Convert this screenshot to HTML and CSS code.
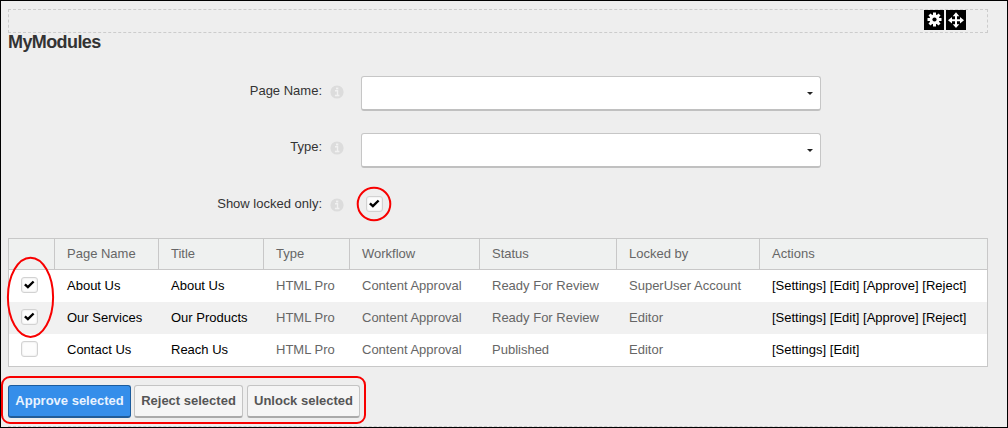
FILE: index.html
```html
<!DOCTYPE html>
<html lang="en">
<head>
<meta charset="utf-8">
<title>MyModules</title>
<link rel="stylesheet" href="styles.css">
</head>
<body>
<svg class="defs" width="0" height="0" aria-hidden="true">
  <symbol id="info" viewBox="0 0 14 14"><circle cx="7" cy="7" r="6.6" fill="#dcdcdc"/><path d="M5 5.8H7.5V10.3M4.9 10.5H9.4" fill="none" stroke="#f1f1f1" stroke-width="1.4"/><path d="M6 2.6H8.3V4.4H6Z" fill="#f1f1f1"/></symbol>
  <symbol id="tick" viewBox="0 0 16 16"><path d="M3.9 7.4L6.9 10.2L12.6 4.5" fill="none" stroke="#000" stroke-width="2.4"/></symbol>
</svg>
<main class="page">
  <div class="toolbar">
    <span class="tool"><svg width="20" height="20" viewBox="0 0 20 20"><g stroke="#fff" stroke-width="3"><path d="M10.5 2.5V16.5M3.5 9.5H17.5M5.5 4.5L15.5 14.5M15.5 4.5L5.5 14.5"/></g><circle cx="10.5" cy="9.5" r="5" fill="#fff"/><circle cx="10.5" cy="9.5" r="2.1" fill="#000"/></svg></span>
    <span class="tool"><svg width="20" height="20" viewBox="0 0 20 20"><path d="M10 4V17M4 10.2H16" stroke="#fff" stroke-width="2"/><path d="M10 2.3L13.3 6.2H6.7ZM10 18L13.3 14.2H6.7ZM2 10.2L6 6.9V13.5ZM18 10.2L14 6.9V13.5Z" fill="#fff"/></svg></span>
  </div>
  <h1 class="title">MyModules</h1>
  <section class="filters">
    <div class="field"><span class="label">Page Name:</span><svg class="info"><use href="#info"/></svg><div class="select"><i class="caret"></i></div></div>
    <div class="field type"><span class="label">Type:</span><svg class="info"><use href="#info"/></svg><div class="select"><i class="caret"></i></div></div>
    <div class="field locked"><span class="label">Show locked only:</span><svg class="info"><use href="#info"/></svg><span class="check"><svg><use href="#tick"/></svg></span></div>
  </section>
  <table class="grid">
    <colgroup><col class="c-check"><col class="c-page"><col class="c-title"><col class="c-type"><col class="c-flow"><col class="c-status"><col class="c-lock"><col class="c-act"></colgroup>
    <thead><tr><th></th><th>Page Name</th><th>Title</th><th>Type</th><th>Workflow</th><th>Status</th><th>Locked by</th><th>Actions</th></tr></thead>
    <tbody>
      <tr><td class="pick"><span class="check"><svg><use href="#tick"/></svg></span></td><td class="dark">About Us</td><td class="dark">About Us</td><td>HTML Pro</td><td>Content Approval</td><td>Ready For Review</td><td>SuperUser Account</td><td class="dark">[Settings] [Edit] [Approve] [Reject]</td></tr>
      <tr class="alt"><td class="pick"><span class="check"><svg><use href="#tick"/></svg></span></td><td class="dark">Our Services</td><td class="dark">Our Products</td><td>HTML Pro</td><td>Content Approval</td><td>Ready For Review</td><td>Editor</td><td class="dark">[Settings] [Edit] [Approve] [Reject]</td></tr>
      <tr><td class="pick"><span class="check"></span></td><td class="dark">Contact Us</td><td class="dark">Reach Us</td><td>HTML Pro</td><td>Content Approval</td><td>Published</td><td>Editor</td><td class="dark">[Settings] [Edit]</td></tr>
    </tbody>
  </table>
  <div class="actions">
    <button class="btn primary">Approve selected</button>
    <button class="btn reject">Reject selected</button>
    <button class="btn unlock">Unlock selected</button>
  </div>
  <div class="footline"></div>
</main>
<svg class="marks" width="1008" height="428" viewBox="0 0 1008 428" fill="none" stroke="#f80000" stroke-width="2">
  <circle cx="374" cy="204" r="16.3"/>
  <ellipse cx="30.5" cy="297.3" rx="22.6" ry="39.6"/>
  <rect x="2" y="377" width="363" height="46" rx="8"/>
</svg>
</body>
</html>
```
FILE: styles.css
```css
* { box-sizing: border-box; }
body {
  margin: 0;
  background: #eee;
  font: 13px/16px "Liberation Sans", Arial, sans-serif;
  color: #333;
}
.defs { position: absolute; }
.page {
  width: 1008px;
  height: 428px;
  border: 1px solid #000;
  padding: 8px 19px 0 7px;
  background: #eee;
  overflow: hidden;
}
.toolbar {
  display: flex;
  justify-content: flex-end;
  gap: 2px;
  height: 24px;
  padding-right: 21px;
  border: 1px dashed #ccc;
}
.tool { width: 20px; height: 20px; background: #000; }
.tool svg { display: block; }
.title {
  margin: 0;
  height: 43px;
  font-size: 18px;
  line-height: 18px;
  letter-spacing: -0.6px;
  color: #333;
}
.field { display: flex; height: 57px; }
.label { width: 314px; padding-top: 7px; text-align: right; }
.type .label { padding-top: 6px; }
.info { width: 14px; height: 14px; margin: 9px 17px 0 8px; }
.type .info { margin-top: 8px; }
.select {
  width: 460px;
  height: 35px;
  padding: 15px 7px 0 0;
  display: flex;
  justify-content: flex-end;
  background: #fff;
  border: 1px solid #c6c6c6;
  border-bottom: 2px solid #c0c0c0;
  border-radius: 3px;
}
.caret {
  width: 0;
  height: 0;
  border: 3px solid transparent;
  border-top-color: #222;
  border-bottom: 0;
}
.locked { height: 48px; }
.locked .label { padding-top: 6px; }
.locked .info { margin-top: 8px; }
.locked .check { margin: 6px 0 0 5px; }
.check {
  display: block;
  width: 17px;
  height: 16px;
  background: #fdfdfd;
  border: 1px solid #d2d2d2;
  border-radius: 3px;
  box-shadow: inset 0 0 2px #ddd;
}
.check svg { display: block; width: 16px; height: 16px; margin: -1px 0 0 -1px; }
.grid {
  table-layout: fixed;
  width: 980px;
  border-collapse: separate;
  border-spacing: 0;
  border: 1px solid #c8c8c8;
  background: #fff;
  color: #666;
}
.c-check { width: 46px; }
.c-page { width: 104px; }
.c-title { width: 105px; }
.c-type { width: 86px; }
.c-flow { width: 130px; }
.c-status { width: 137px; }
.c-lock { width: 143px; }
th {
  height: 31px;
  padding: 0 0 0 12px;
  text-align: left;
  font-weight: normal;
  background: #eff1f0;
  border-right: 1px solid #c8c8c8;
  border-bottom: 1px solid #c8c8c8;
}
th:last-child { border-right: 0; }
td { height: 32px; padding: 0 0 0 12px; white-space: nowrap; }
.alt { background: #f1f1f1; }
.dark { color: #000; }
.pick { padding: 0 0 2px 12px; }
.actions { display: flex; gap: 3px; padding-top: 18px; }
.btn {
  height: 33px;
  padding: 0;
  font: bold 13px/16px "Liberation Sans", Arial, sans-serif;
  color: #555;
  background: #f5f5f5;
  border: 1px solid #c4c4c4;
  border-bottom: 2px solid #aaa;
  border-radius: 3px;
  white-space: nowrap;
}
.primary { width: 123px; color: #e9f3ff; background: #358eea; border-color: #1c5c9e; border-bottom-color: #215c98; }
.reject { width: 109px; }
.unlock { width: 113px; margin-left: 1px; }
.footline { margin-top: 8px; border-top: 1px dashed #ccc; }
.marks { position: absolute; left: 0; top: 0; pointer-events: none; }
```
